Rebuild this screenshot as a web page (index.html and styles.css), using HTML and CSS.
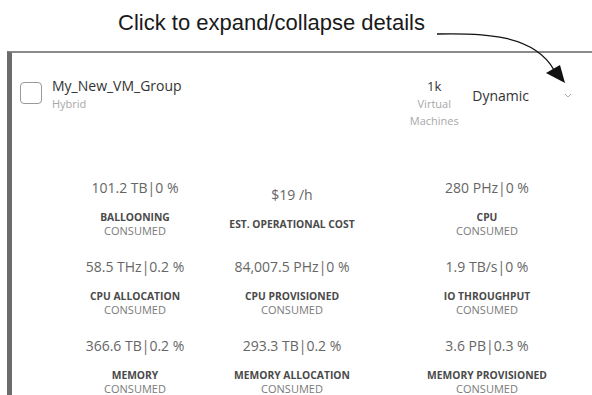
FILE: index.html
```html
<!DOCTYPE html>
<html lang="en">
<head>
  <meta charset="UTF-8">
  <meta name="viewport" content="width=device-width, initial-scale=1.0">
  <title>VM Group Details</title>
  <link rel="stylesheet" href="styles.css">
</head>
<body>
  <div class="caption">Click to expand/collapse details</div>

  <svg class="callout" width="592" height="100" viewBox="0 0 592 100">
    <path d="M437 34 C 482 33, 534 34, 554 70" fill="none" stroke="#111" stroke-width="1.3"/>
    <polygon points="546,73 560,65 565,83" fill="#111"/>
  </svg>

  <div class="card">
    <div class="card-header">
      <div class="checkbox"></div>
      <div class="group-name">
        <div class="name">My_New_VM_Group</div>
        <div class="sub">Hybrid</div>
      </div>
      <div class="count">
        <div class="count-value">1k</div>
        <div class="sub">Virtual<br>Machines</div>
      </div>
      <div class="type">Dynamic</div>
      <svg class="chevron" width="8" height="5" viewBox="0 0 8 5">
        <polyline points="1,1 4,4 7,1" fill="none" stroke="#aaa" stroke-width="1"/>
      </svg>
    </div>

    <div class="metrics">
      <div class="metric">
        <div class="value">101.2 TB|0 %</div>
        <div class="label">Ballooning</div>
        <div class="kind">Consumed</div>
      </div>
      <div class="metric">
        <div class="value">$19 /h</div>
        <div class="label">Est. Operational Cost</div>
      </div>
      <div class="metric">
        <div class="value">280 PHz|0 %</div>
        <div class="label">CPU</div>
        <div class="kind">Consumed</div>
      </div>

      <div class="metric">
        <div class="value">58.5 THz|0.2 %</div>
        <div class="label">CPU Allocation</div>
        <div class="kind">Consumed</div>
      </div>
      <div class="metric">
        <div class="value">84,007.5 PHz|0 %</div>
        <div class="label">CPU Provisioned</div>
        <div class="kind">Consumed</div>
      </div>
      <div class="metric">
        <div class="value">1.9 TB/s|0 %</div>
        <div class="label">IO Throughput</div>
        <div class="kind">Consumed</div>
      </div>

      <div class="metric">
        <div class="value">366.6 TB|0.2 %</div>
        <div class="label">Memory</div>
        <div class="kind">Consumed</div>
      </div>
      <div class="metric">
        <div class="value">293.3 TB|0.2 %</div>
        <div class="label">Memory Allocation</div>
        <div class="kind">Consumed</div>
      </div>
      <div class="metric">
        <div class="value">3.6 PB|0.3 %</div>
        <div class="label">Memory Provisioned</div>
        <div class="kind">Consumed</div>
      </div>
    </div>
  </div>
</body>
</html>
```

FILE: styles.css
```css
body {
  margin: 0;
  font-family: "Open Sans", sans-serif;
  background: #fff;
  overflow: hidden;
  position: relative;
}

.caption {
  font-family: "Liberation Sans", Arial, sans-serif;
  font-size: 22px;
  color: #1a1a1a;
  padding: 10px 0 0 118px;
  height: 41px;
  line-height: 26px;
}

.callout {
  position: absolute;
  left: 0;
  top: 0;
}

.card {
  margin-left: 7px;
  border-left: 5px solid #6b6b6b;
  border-top: 2px solid #8a8a8a;
  height: 400px;
}

.card-header {
  display: flex;
  align-items: flex-start;
  padding: 24px 0 0 8px;
  height: 90px;
  box-sizing: border-box;
}

.checkbox {
  width: 20px;
  height: 20px;
  border: 1.5px solid #9a9a9a;
  border-radius: 4px;
  margin-top: 5px;
}

.group-name {
  margin-left: 10px;
  flex: 1;
}

.name {
  font-size: 14px;
  color: #333;
  line-height: 18px;
}

.sub {
  font-size: 11px;
  color: #a8a8a8;
  line-height: 17px;
}

.count {
  text-align: center;
  width: 60px;
}

.count-value {
  font-size: 13px;
  color: #333;
  line-height: 18px;
}

.type {
  font-size: 14px;
  color: #333;
  margin: 9px 0 0 8px;
}

.chevron {
  margin: 16px 20px 0 35px;
}

.metrics {
  display: grid;
  grid-template-columns: 160px 154px 236px;
  padding-left: 43px;
  row-gap: 20px;
  align-items: center;
  margin-top: 35px;
}

.metric {
  text-align: center;
}

.value {
  font-size: 14px;
  color: #666;
  line-height: 20px;
  margin-bottom: 13px;
}

.label {
  font-size: 10.3px;
  font-weight: 700;
  color: #4a4a4a;
  text-transform: uppercase;
  line-height: 13px;
}

.kind {
  font-size: 11px;
  color: #7a7a7a;
  text-transform: uppercase;
  line-height: 13px;
}
```
